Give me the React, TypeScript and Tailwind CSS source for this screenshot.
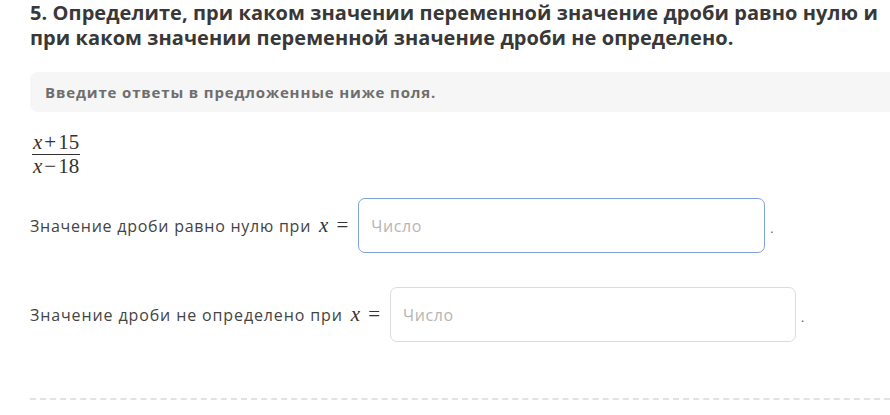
import type { ReactNode } from 'react';

const sans = "font-['Open_Sans','Liberation_Sans',sans-serif]";
const serif = "font-['Liberation_Serif','DejaVu_Serif',serif]";

function MathX() {
  return (
    <span className={`${serif} ml-[8px] mr-[10px] text-[21px] text-[#333]`}>
      <i>x</i>
      <span className="ml-[8px]">=</span>
    </span>
  );
}

function Fraction({ top, bottom }: { top: ReactNode; bottom: ReactNode }) {
  return (
    <div className={`${serif} inline-flex flex-col items-center text-[21px] leading-[19px] text-[#333]`}>
      <span className="px-[1px] pb-[2px]">{top}</span>
      <span className="h-px w-full bg-[#333]" />
      <span className="px-[1px] pt-[2px]">{bottom}</span>
    </div>
  );
}

interface AnswerRowProps {
  label: string;
  labelClass: string;
  focused?: boolean;
}

function AnswerRow({ label, labelClass, focused }: AnswerRowProps) {
  return (
    <div className="flex items-center">
      <span className={`text-[16px] font-medium text-[#444] ${labelClass}`}>{label}</span>
      <MathX />
      <div
        className={
          focused
            ? 'flex h-[55px] w-[407px] items-center rounded-[7px] border-[1.5px] border-[#7ea2d9] pl-[12px]'
            : 'flex h-[55px] w-[406px] items-center rounded-[7px] border-[1.5px] border-[#dcdcdc] pl-[12px]'
        }
      >
        <span className="text-[16px] tracking-[0.6px] text-[#b5b5b5]">Число</span>
      </div>
      <span className="ml-[5px] mt-[6px] text-[12px] text-[#555]">.</span>
    </div>
  );
}

export default function App() {
  return (
    <div className={`${sans} h-[415px] w-[890px] overflow-hidden bg-white pl-[30px]`}>
      {/* Task heading */}
      <h2 className="text-[20px] font-bold leading-[25px] tracking-[0.07px] text-[#383838]">
        5. Определите, при каком значении переменной значение дроби равно нулю и при каком значении
        переменной значение дроби не определено.
      </h2>

      {/* Hint box */}
      <div className="mt-[22px] flex h-[40px] items-center rounded-l-[8px] bg-[#f6f6f6] pl-[15px]">
        <span className="text-[15px] font-bold tracking-[0.85px] text-[#6e6e6e]">
          Введите ответы в предложенные ниже поля.
        </span>
      </div>

      <div className="mt-[19px] pl-[2px]">
        <Fraction
          top={
            <>
              <i>x</i>
              <span className="mx-[2px]">+</span>15
            </>
          }
          bottom={
            <>
              <i>x</i>
              <span className="mx-[2px]">−</span>18
            </>
          }
        />
      </div>

      <div className="mt-[22px]">
        <AnswerRow label="Значение дроби равно нулю при" labelClass="tracking-[0.75px]" focused />
      </div>
      <div className="mt-[34px]">
        <AnswerRow label="Значение дроби не определено при" labelClass="tracking-[0.88px]" />
      </div>

      {/* Section divider */}
      <div className="mt-[56px] border-t-2 border-dashed border-[#e2e2e2]" />
    </div>
  );
}
